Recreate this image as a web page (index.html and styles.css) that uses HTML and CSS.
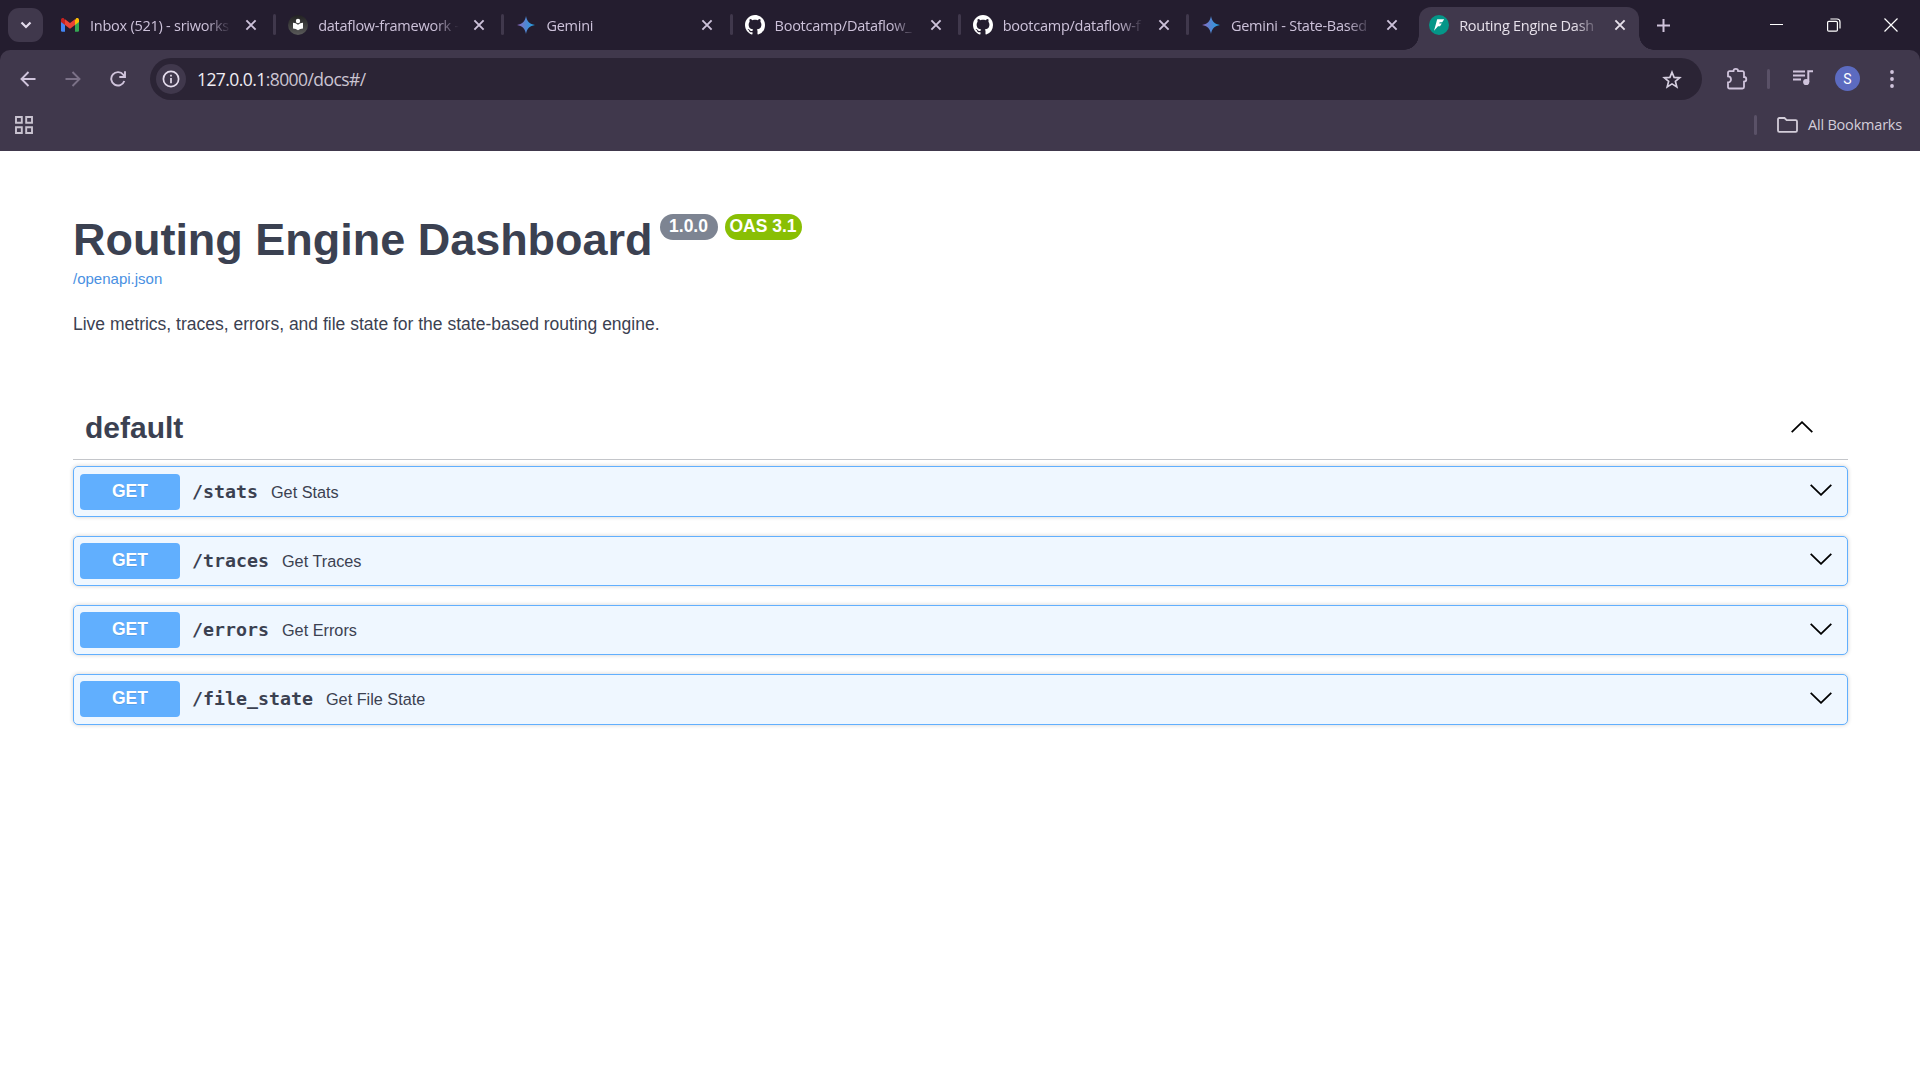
FILE: index.html
```html
<!DOCTYPE html>
<html lang="en">
<head>
<meta charset="utf-8">
<title>Routing Engine Dashboard</title>
<link rel="stylesheet" href="styles.css">
</head>
<body>
<svg class="defs" width="0" height="0">
  <defs>
    <linearGradient id="gem" x1="0" y1="0" x2="1" y2="0"><stop offset="0" stop-color="#9168c0"/><stop offset=".45" stop-color="#5684d1"/><stop offset="1" stop-color="#1ba1e3"/></linearGradient>
    <linearGradient id="book" x1="0" y1="0" x2="0" y2="1"><stop offset="0" stop-color="#222"/><stop offset="1" stop-color="#5a5a5a"/></linearGradient>
  </defs>
  <symbol id="x" viewBox="0 0 12 12"><path d="M1.4 1.4l9.2 9.2M10.6 1.4L1.4 10.6" fill="none" stroke="currentColor" stroke-width="1.9"/></symbol>
  <symbol id="gemini" viewBox="0 0 20 20"><path d="M10 1C10.8 6.200 13.800 9.200 19 10C13.800 10.800 10.800 13.800 10 19C9.200 13.800 6.200 10.800 1 10C6.200 9.200 9.200 6.200 10 1z" fill="url(#gem)"/></symbol>
  <symbol id="github" viewBox="0 0 16 16"><path fill="#fff" d="M8 0C3.58 0 0 3.58 0 8c0 3.54 2.29 6.53 5.47 7.59.4.07.55-.17.55-.38 0-.19-.01-.82-.01-1.49-2.01.37-2.53-.49-2.69-.94-.09-.23-.48-.94-.82-1.13-.28-.15-.68-.52-.01-.53.63-.01 1.08.58 1.23.82.72 1.21 1.87.87 2.33.66.07-.52.28-.87.51-1.07-1.78-.2-3.64-.89-3.64-3.95 0-.87.31-1.59.82-2.15-.08-.2-.36-1.02.08-2.12 0 0 .67-.21 2.2.82.64-.18 1.32-.27 2-.27s1.36.09 2 .27c1.53-1.04 2.2-.82 2.2-.82.44 1.1.16 1.92.08 2.12.51.56.82 1.27.82 2.15 0 3.07-1.87 3.75-3.65 3.95.29.25.54.73.54 1.48 0 1.07-.01 1.93-.01 2.2 0 .21.15.46.55.38A8.01 8.01 0 0 0 16 8c0-4.42-3.58-8-8-8z"/></symbol>
  <symbol id="chev" viewBox="0 0 22 12"><path d="M.7.9L11 10.800 21.300.9" fill="none" stroke="#000" stroke-width="1.8"/></symbol>
</svg>

<header class="browser">
  <div class="tabstrip">
    <div class="tabsearch"><svg width="12" height="8" viewBox="0 0 12 8"><path d="M1.500 1.500L6 6l4.500-4.500" fill="none" stroke="#e4dcec" stroke-width="2.200"/></svg></div>
    <div class="tab first">
      <svg class="fav" viewBox="0 0 20 20"><path d="M1 4.500V15.500a1.200 1.200 0 0 0 1.200 1.200H5V8z" fill="#4285f4"/><path d="M19 4.500V15.500a1.200 1.200 0 0 1-1.200 1.200H15V8z" fill="#34a853"/><path d="M15 5v5l4-3V5c0-2-2-2.400-3-1.600z" fill="#fbbc04"/><path d="M5 5v5L1 7V5c0-2 2-2.400 3-1.600z" fill="#c5221f"/><path d="M5 4.200l5 3.800 5-3.800V10l-5 3.800L5 10z" fill="#ea4335"/></svg>
      <span class="label">Inbox (521) - sriworks</span><svg class="close"><use href="#x"/></svg>
    </div>
    <div class="tab">
      <svg class="fav" viewBox="0 0 20 20"><circle cx="10" cy="10" r="10" fill="url(#book)"/><circle cx="10" cy="6" r="2.200" fill="#fff"/><path d="M5 7.800q3 .2 5 2 2-1.800 5-2v5.700q-3 .2-5 1.700-2-1.500-5-1.700z" fill="#fff"/></svg>
      <span class="label">dataflow-framework -</span><svg class="close"><use href="#x"/></svg>
    </div>
    <div class="tab"><svg class="fav"><use href="#gemini"/></svg><span class="label">Gemini</span><svg class="close"><use href="#x"/></svg></div>
    <div class="tab"><svg class="fav"><use href="#github"/></svg><span class="label">Bootcamp/Dataflow_</span><svg class="close"><use href="#x"/></svg></div>
    <div class="tab"><svg class="fav"><use href="#github"/></svg><span class="label">bootcamp/dataflow-f</span><svg class="close"><use href="#x"/></svg></div>
    <div class="tab"><svg class="fav"><use href="#gemini"/></svg><span class="label">Gemini - State-Based</span><svg class="close"><use href="#x"/></svg></div>
    <div class="tab active">
      <svg class="fav" viewBox="0 0 20 20"><circle cx="10" cy="10" r="10" fill="#049688"/><path d="M8.200 4.200h7l-2 3H10.700l-.5 1.300h2.600l-1.800 2.700H9L5 15.800z" fill="#fff"/></svg>
      <span class="label">Routing Engine Dash</span><svg class="close"><use href="#x"/></svg>
    </div>
    <svg class="plus" width="13" height="13" viewBox="0 0 13 13"><path d="M6.500 0v13M0 6.500h13" stroke="#d0c4dc" stroke-width="2"/></svg>
    <div class="window">
      <svg width="14" height="14" viewBox="0 0 14 14"><path d="M0 6.500h13" stroke="#fff"/></svg>
      <svg width="14" height="14" viewBox="0 0 14 14" fill="none" stroke="#fff" stroke-width="1.200"><rect x=".6" y="3.400" width="9.800" height="9.800" rx="1.200"/><path d="M3.400 1H10a3 3 0 0 1 3 3v6.600"/></svg>
      <svg width="14" height="14" viewBox="0 0 14 14"><path d="M.5.5l13 13M13.500.5l-13 13" stroke="#fff" stroke-width="1.200"/></svg>
    </div>
  </div>

  <div class="toolbar">
    <div class="nav">
      <svg width="16" height="16" viewBox="0 0 16 16"><path d="M15.500 8H2M8.500 1L1.500 8l7 7" fill="none" stroke="#d0c4dc" stroke-width="1.900"/></svg>
      <svg width="16" height="16" viewBox="0 0 16 16"><path d="M.5 8H14M7.500 1l7 7-7 7" fill="none" stroke="#7b7187" stroke-width="1.900"/></svg>
      <svg width="16" height="16" viewBox="0 0 16 16"><path d="M14.300 10A6.700 6.700 0 1 1 13.300 3.800L15 5.500M15 .3V6H9.300" fill="none" stroke="#d0c4dc" stroke-width="1.900"/></svg>
    </div>
    <div class="omnibox">
      <div class="info"><svg width="18" height="18" viewBox="0 0 18 18"><circle cx="9" cy="9" r="7.600" fill="none" stroke="#e4dcec" stroke-width="1.700"/><path d="M9 8v5.200M9 4.800v1.800" stroke="#e4dcec" stroke-width="1.700"/></svg></div>
      <span class="url"><b>127.0.0.1</b>:8000/docs#/</span>
      <svg class="star" width="20" height="19" viewBox="0 0 20 19"><path d="M10 2.200l2.100 5.200 5.600.4-4.300 3.600 1.400 5.500L10 13.900l-4.800 3 1.400-5.500L2.300 7.800l5.600-.4z" fill="none" stroke="#d6cfe0" stroke-width="1.700"/></svg>
    </div>
    <svg class="ext" width="22" height="22" viewBox="0 0 22 22"><path d="M3.500 3.200H7.500a2.300 2.300 0 0 1 4.600 0H16.500a1.500 1.500 0 0 1 1.500 1.500V9a2.300 2.300 0 0 1 0 4.600V19a1.500 1.500 0 0 1-1.500 1.500H3.500A1.500 1.500 0 0 1 2 19v-4.600a3 3 0 0 0 0-6V4.700a1.500 1.500 0 0 1 1.500-1.500z" fill="none" stroke="#d0c4dc" stroke-width="1.800"/></svg>
    <i class="divider"></i>
    <svg class="media" width="20" height="16" viewBox="0 0 20 16"><path d="M0 1.500h12M0 5.500h12M0 9.500h8" stroke="#d0c4dc" stroke-width="2"/><path d="M15.300 12V1.200H20" fill="none" stroke="#d0c4dc" stroke-width="2"/><circle cx="13.200" cy="12" r="3.100" fill="#d0c4dc"/></svg>
    <div class="avatar">S</div>
    <svg class="more" width="4" height="18" viewBox="0 0 4 18" fill="#d0c4dc"><circle cx="2" cy="2" r="1.900"/><circle cx="2" cy="9" r="1.900"/><circle cx="2" cy="16" r="1.900"/></svg>
  </div>

  <div class="bookmarks">
    <svg width="18" height="18" viewBox="0 0 18 18" fill="none" stroke="#c9c3d0" stroke-width="1.900"><path d="M1 1h5.800v5.800H1zM11.200 1H17v5.800h-5.800zM1 11.200h5.800V17H1zM11.200 11.200H17V17h-5.800z"/></svg>
    <i class="divider"></i>
    <svg width="21" height="16" viewBox="0 0 21 16"><path d="M1 2.300A1.300 1.300 0 0 1 2.300 1H7.500L9.700 3.200H18.700A1.300 1.300 0 0 1 20 4.500v9A1.300 1.300 0 0 1 18.700 14.800H2.300A1.300 1.300 0 0 1 1 13.500z" fill="none" stroke="#d3cdd9" stroke-width="1.800"/></svg>
    <span>All Bookmarks</span>
  </div>
</header>

<main class="docs">
  <section class="intro">
    <h1>Routing Engine Dashboard<span class="badge version">1.0.0</span><span class="badge oas">OAS 3.1</span></h1>
    <a class="spec">/openapi.json</a>
    <p>Live metrics, traces, errors, and file state for the state-based routing engine.</p>
  </section>
  <section class="operations">
    <h2><span>default</span><svg class="arrow up"><use href="#chev"/></svg></h2>
    <div class="op"><span class="method">GET</span><span class="path">/stats</span><span class="summary">Get Stats</span><svg class="arrow"><use href="#chev"/></svg></div>
    <div class="op"><span class="method">GET</span><span class="path">/traces</span><span class="summary">Get Traces</span><svg class="arrow"><use href="#chev"/></svg></div>
    <div class="op"><span class="method">GET</span><span class="path">/errors</span><span class="summary">Get Errors</span><svg class="arrow"><use href="#chev"/></svg></div>
    <div class="op"><span class="method">GET</span><span class="path">/file_state</span><span class="summary">Get File State</span><svg class="arrow"><use href="#chev"/></svg></div>
  </section>
</main>
</body>
</html>
```
FILE: styles.css
```css
* { box-sizing: border-box; }
body { margin: 0; height: 1078px; overflow: hidden; background: #fff; color: #3b4151; font-family: "Liberation Sans", Arial, sans-serif; }
svg { display: block; flex: none; }
.defs { position: absolute; }

/* Browser chrome */
.browser { height: 151px; background: #241d2f; color: #cdc2da; font-family: "Open Sans", "Noto Sans", sans-serif; }
.tabstrip { display: flex; height: 50px; }
.tabsearch { display: flex; align-items: center; justify-content: center; flex: none; width: 35px; height: 34px; margin: 8px 2px 0 8px; border-radius: 11px; background: #40384c; }
.tab { display: flex; align-items: center; flex: none; width: 228.2px; padding-left: 15px; position: relative; }
.tab::before { content: ""; position: absolute; left: 0; top: 14px; width: 3px; height: 21px; border-radius: 2px; background: #40384c; }
.tab.first::before { display: none; }
.fav { width: 20px; height: 20px; }
.label { width: 143px; margin-left: 10px; overflow: hidden; white-space: nowrap; font-size: 14.5px; line-height: 24px; letter-spacing: -.25px; padding-top: 1px; -webkit-mask-image: linear-gradient(90deg, #000 116px, transparent 141px); mask-image: linear-gradient(90deg, #000 116px, transparent 141px); }
.close { width: 12px; height: 12px; margin-left: 12px; }
.tab.active { width: 220px; height: 43px; margin: 7px 0 0 5px; padding: 0 0 0 10px; border-radius: 12px 12px 0 0; background: #40384c; color: #e6e0ea; }
.tab.active > * { margin-bottom: 7px; }
.tab.active::before, .tab.active::after { content: ""; position: absolute; top: auto; bottom: 0; left: -15px; width: 15px; height: 15px; border-radius: 0; background: radial-gradient(circle at 0 0, transparent 14.5px, #40384c 15px); }
.tab.active::after { left: auto; right: -15px; margin: 0; background: radial-gradient(circle at 100% 0, transparent 14.5px, #40384c 15px); }
.plus { margin: 19px 0 0 18px; }
.window { display: flex; gap: 43px; margin: 18px 22px 0 auto; }

.toolbar { display: flex; align-items: center; height: 58px; padding-right: 26px; background: #40384c; border-radius: 10px 10px 0 0; }
.nav { display: flex; gap: 29px; padding: 0 0 1px 20px; width: 150px; }
.omnibox { display: flex; align-items: center; width: 1552px; height: 42px; padding: 0 20px 0 6px; border-radius: 21px; background: #2b2435; }
.info { display: flex; align-items: center; justify-content: center; width: 30px; height: 30px; border-radius: 50%; background: #40384c; }
.url { margin-left: 11px; font-size: 17.5px; letter-spacing: -.57px; line-height: 24px; color: #cbc5d2; }
.url b { font-weight: 400; color: #f0edf3; }
.star { margin-left: auto; }
.ext { margin-left: 24px; }
.divider { width: 3px; height: 20px; border-radius: 2px; background: #5a5167; }
.toolbar .divider { margin-left: 19px; }
.media { margin: 0 0 2px 23px; }
.avatar { width: 25px; height: 25px; margin: 0 0 1px 22px; border-radius: 50%; background: #5c6bc0; color: #fff; text-align: center; font: 14px/26px Roboto, sans-serif; }
.more { margin-left: auto; margin-bottom: 1px; }

.bookmarks { display: flex; align-items: center; height: 43px; padding: 0 18px 9px 15px; background: #40384c; font-size: 14.5px; color: #d3cdd9; }
.bookmarks .divider { margin-left: auto; margin-right: 20px; }
.bookmarks span { margin-left: 10px; padding-bottom: 2px; letter-spacing: -.2px; }

/* API documentation */
.docs { padding: 62px 72px 0 73px; }
.intro { height: 183px; }
h1 { display: flex; align-items: flex-start; margin: 0; font-size: 45px; line-height: 54px; height: 56px; letter-spacing: -.02px; }
.badge { height: 26px; margin-top: 1px; border-radius: 26px; color: #fff; font-size: 17.5px; line-height: 24px; text-align: center; }
.version { width: 58px; margin-left: 7px; background: #7d8492; }
.oas { width: 77px; margin-left: 7px; background: #89bf04; }
.spec { display: block; color: #4990e2; font-size: 15px; line-height: 20px; }
p { margin: 24px 0 0; font-size: 17.5px; line-height: 22px; }
h2 { display: flex; align-items: center; justify-content: space-between; height: 64px; margin: 0 0 6.4px; padding: 0 35px 0 12px; border-bottom: 1px solid #c4c6ca; font-size: 30px; line-height: 34px; }
.arrow { width: 22px; height: 12px; }
.up { transform: rotate(180deg); margin-bottom: 2px; }
.op { display: flex; align-items: center; height: 50.5px; margin-bottom: 18.75px; padding: 0 15px 0 6px; border: 1px solid #61affe; border-radius: 5px; background: #eff7ff; box-shadow: 0 0 4px rgba(0, 0, 0, .19); }
.method { width: 100px; height: 36px; border-radius: 4px; background: #61affe; color: #fff; font-size: 17.5px; font-weight: 700; line-height: 34px; text-align: center; text-shadow: 0 1px 0 rgba(0, 0, 0, .1); }
.path { margin-left: 12px; font: 700 18.27px/24px "DejaVu Sans Mono", monospace; }
.summary { margin-left: 13px; font-size: 16.25px; line-height: 20px; }
.op .arrow { margin-left: auto; margin-bottom: 3px; }
```
